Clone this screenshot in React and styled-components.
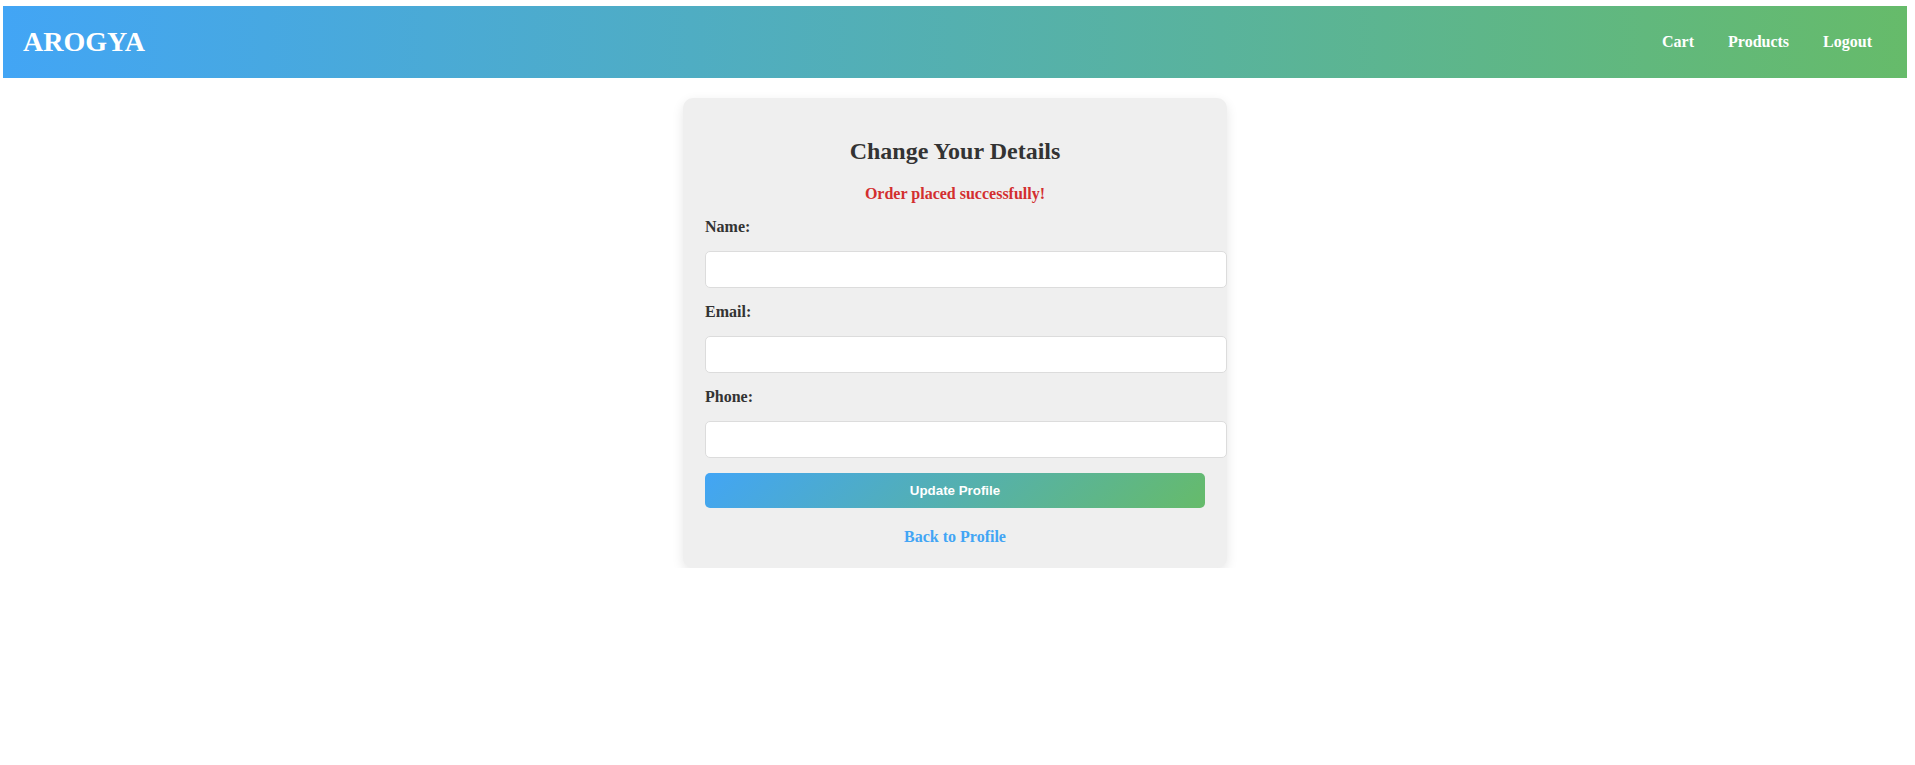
import React from 'react';
import styled, { createGlobalStyle } from 'styled-components';

const colors = {
  blue: '#42a5f5',
  green: '#66bb6a',
  text: '#333333',
  card: '#efefef',
  error: '#d32f2f',
  white: '#ffffff',
};

const serif = '"Liberation Serif", "Times New Roman", serif';
const sans = '"Liberation Sans", Arial, sans-serif';

const GlobalStyle = createGlobalStyle`
  body {
    margin: 0;
    background: ${colors.white};
    font-family: ${serif};
  }
`;

const Page = styled.div`
  margin: 6px 8px 0 3px;
`;

const NavBar = styled.nav`
  display: flex;
  align-items: center;
  justify-content: space-between;
  height: 72px;
  padding: 0 35px 0 20px;
  background: linear-gradient(to right, ${colors.blue}, ${colors.green});
`;

const Logo = styled.div`
  font-family: ${serif};
  font-size: 28px;
  font-weight: 700;
  color: ${colors.white};
`;

const NavLinks = styled.div`
  display: flex;
  gap: 34px;
`;

const NavLink = styled.a`
  font-family: ${serif};
  font-size: 16px;
  font-weight: 700;
  color: ${colors.white};
  text-decoration: none;
  cursor: pointer;
`;

const Card = styled.div`
  width: 544px;
  box-sizing: border-box;
  margin: 20px auto 0;
  padding: 20px 22px 22px 22px;
  background: ${colors.card};
  border-radius: 10px;
  box-shadow: 0 4px 12px rgba(0, 0, 0, 0.1);
`;

const Title = styled.h2`
  margin: 20px 0;
  font-family: ${serif};
  font-size: 24px;
  font-weight: 700;
  color: ${colors.text};
  text-align: center;
`;

const Message = styled.p`
  margin: 0 0 15px;
  font-size: 16px;
  line-height: 18px;
  font-weight: 700;
  color: ${colors.error};
  text-align: center;
`;

const Form = styled.form`
  display: flex;
  flex-direction: column;
  align-items: flex-start;
`;

const Label = styled.label`
  display: block;
  margin-bottom: 15px;
  font-size: 16px;
  line-height: 18px;
  font-weight: 700;
  color: ${colors.text};
`;

const Input = styled.input`
  box-sizing: content-box;
  width: 100%;
  height: 15px;
  margin: 0 0 15px;
  padding: 10px;
  border: 1px solid #dcdcdc;
  border-radius: 5px;
  background: ${colors.white};
  font-family: ${sans};
  font-size: 13.33px;
  outline: none;
`;

const SubmitButton = styled.button`
  box-sizing: border-box;
  width: 100%;
  height: 35px;
  padding: 10px;
  border: none;
  border-radius: 5px;
  background: linear-gradient(135deg, ${colors.blue}, ${colors.green});
  color: ${colors.white};
  font-family: ${sans};
  font-size: 13.33px;
  line-height: 15px;
  font-weight: 700;
  cursor: pointer;
`;

const BackLink = styled.a`
  display: block;
  margin-top: 20px;
  font-size: 16px;
  line-height: 18px;
  font-weight: 700;
  color: ${colors.blue};
  text-align: center;
  text-decoration: none;
  cursor: pointer;
`;

const fields = [
  { id: 'name', label: 'Name:', type: 'text' },
  { id: 'email', label: 'Email:', type: 'email' },
  { id: 'phone', label: 'Phone:', type: 'tel' },
];

const App = () => (
  <Page>
    <GlobalStyle />
    <NavBar>
      <Logo>AROGYA</Logo>
      <NavLinks>
        <NavLink>Cart</NavLink>
        <NavLink>Products</NavLink>
        <NavLink>Logout</NavLink>
      </NavLinks>
    </NavBar>
    <Card>
      <Title>Change Your Details</Title>
      <Message>Order placed successfully!</Message>
      <Form onSubmit={(e) => e.preventDefault()}>
        {fields.map((f) => (
          <React.Fragment key={f.id}>
            <Label htmlFor={f.id}>{f.label}</Label>
            <Input id={f.id} type={f.type} />
          </React.Fragment>
        ))}
        <SubmitButton type="submit">Update Profile</SubmitButton>
      </Form>
      <BackLink>Back to Profile</BackLink>
    </Card>
  </Page>
);

export default App;
